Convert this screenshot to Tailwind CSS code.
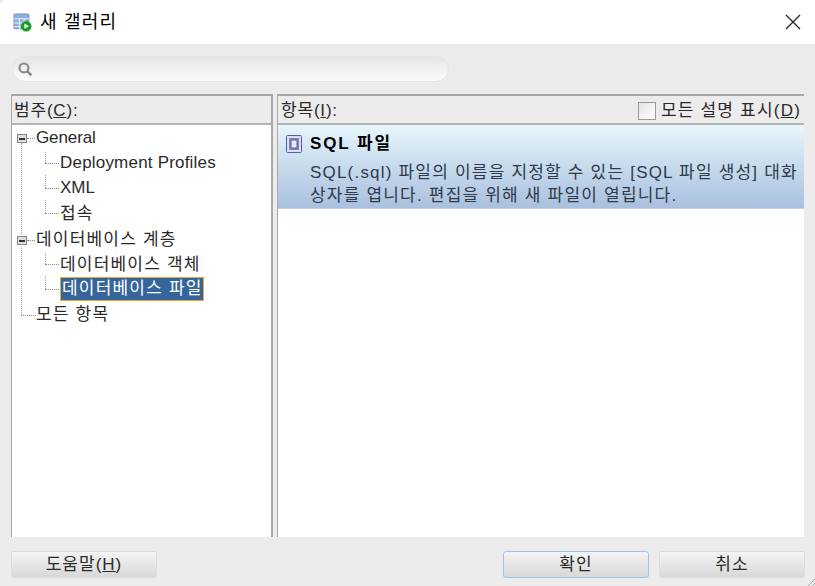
<!DOCTYPE html>
<html lang="ko">
<head>
    <meta charset="UTF-8">
    <title>새 갤러리</title>
    <script src="https://cdn.jsdelivr.net/npm/@tailwindcss/browser@4"></script>
</head>
<body class="relative w-[815px] h-[586px] overflow-hidden bg-[#ececec] text-[17px] text-[#2a2a2a] font-['Liberation_Sans','Noto_Sans_CJK_KR',sans-serif]">
    <!-- Title bar -->
    <div class="h-[44px] bg-white flex items-center pl-[13px] pr-[14px] rounded-tl-[6px]">
        <svg width="19" height="19" viewBox="0 0 18 18" class="mr-[8px]">
            <rect x="1" y="1" width="14" height="14" rx="1" fill="#8fb0dc" stroke="#6f93c6"/>
            <path d="M1 5.500h14M1 9.500h14M1 13h14M6 5.500v9.500M10.500 5.500v9.500" stroke="#e9f0fa" stroke-width="1"/>
            <circle cx="12.500" cy="12.500" r="5" fill="#1f9c1f"/>
            <path d="M10.800 10l4.400 2.500-4.400 2.500z" fill="#fff"/>
        </svg>
        <span class="text-[18px] tracking-[1.2px] text-black">새 갤러리</span>
        <svg width="16" height="16" viewBox="0 0 16 16" class="ml-auto">
            <path d="M1 1l14 14M15 1L1 15" stroke="#222" stroke-width="1.300"/>
        </svg>
    </div>

    <!-- Search -->
    <div class="pt-[12px] pl-[12px]">
        <div class="w-[437px] h-[26px] rounded-full bg-gradient-to-b from-[#e6e6e6] to-[#fbfbfb] border border-[#e4e4e4] flex items-center pl-[4px]">
            <svg width="16" height="16" viewBox="0 0 15 15">
                <circle cx="6.500" cy="6.500" r="4.200" fill="none" stroke="#8a8a8a" stroke-width="2"/>
                <path d="M9.800 9.800l3.700 3.700" stroke="#8a8a8a" stroke-width="2.400"/>
            </svg>
        </div>
    </div>

    <!-- Panels -->
    <div class="flex gap-[4px] pl-[11px] pt-[12px]">
        <!-- Categories -->
        <div class="w-[262px] h-[443px] flex flex-col border-l border-r-2 border-t-2 border-[#a8a8a8]">
            <div class="h-[29px] shrink-0 border-b-2 border-[#b4b4b4] pl-[2px] pt-[3px] flex items-center tracking-[0.8px]">범주(<u>C</u>):</div>
            <div class="flex-1 bg-white">
                <div class="relative h-[25px] flex items-center pl-[24px] tracking-[-0.1px]">
                    <span class="absolute left-[5px] top-[9px] w-[10px] h-[9px] border border-[#888] bg-[#ddd] flex items-center justify-center"><span class="w-[6px] h-[2px] bg-[#333]"></span></span>
                    <span class="absolute left-[15px] top-[13px] w-[8px] border-t border-dotted border-[#888]"></span>
                    <span class="absolute left-[9px] top-[18px] h-[172px] border-l border-dotted border-[#aaa]"></span>
                    General
                </div>
                <div class="relative h-[25px] flex items-center pl-[48px] tracking-[0.2px]">
                    <span class="absolute left-[33px] top-[2px] h-[11px] border-l border-dotted border-[#aaa]"></span>
                    <span class="absolute left-[33px] top-[13px] w-[14px] border-t border-dotted border-[#888]"></span>
                    Deployment Profiles
                </div>
                <div class="relative h-[25px] flex items-center pl-[48px]">
                    <span class="absolute left-[33px] top-0 h-[13px] border-l border-dotted border-[#aaa]"></span>
                    <span class="absolute left-[33px] top-[13px] w-[14px] border-t border-dotted border-[#888]"></span>
                    XML
                </div>
                <div class="relative h-[26px] flex items-center pl-[48px] pt-[2px] tracking-[1.2px]">
                    <span class="absolute left-[33px] top-0 h-[13px] border-l border-dotted border-[#aaa]"></span>
                    <span class="absolute left-[33px] top-[13px] w-[14px] border-t border-dotted border-[#888]"></span>
                    접속
                </div>
                <div class="relative h-[25px] flex items-center pl-[24px] pt-[2px] tracking-[1.2px]">
                    <span class="absolute left-[5px] top-[10px] w-[10px] h-[9px] border border-[#888] bg-[#ddd] flex items-center justify-center"><span class="w-[6px] h-[2px] bg-[#333]"></span></span>
                    <span class="absolute left-[15px] top-[14px] w-[8px] border-t border-dotted border-[#888]"></span>
                    데이터베이스 계층
                </div>
                <div class="relative h-[25px] flex items-center pl-[48px] pt-[2px] tracking-[1.2px]">
                    <span class="absolute left-[33px] top-[2px] h-[11px] border-l border-dotted border-[#aaa]"></span>
                    <span class="absolute left-[33px] top-[13px] w-[14px] border-t border-dotted border-[#888]"></span>
                    데이터베이스 객체
                </div>
                <div class="relative h-[25px] flex items-center pl-[48px] tracking-[1.2px]">
                    <span class="absolute left-[33px] top-0 h-[13px] border-l border-dotted border-[#aaa]"></span>
                    <span class="absolute left-[33px] top-[13px] w-[14px] border-t border-dotted border-[#888]"></span>
                    <span class="h-[24px] mt-[1px] pl-[1px] bg-[#36659c] border border-[#f0a830] text-white flex items-center">데이터베이스 파일</span>
                </div>
                <div class="relative h-[25px] flex items-center pl-[24px] pt-[2px] tracking-[1.2px]">
                    <span class="absolute left-[9px] top-[14px] w-[15px] border-t border-dotted border-[#888]"></span>
                    모든 항목
                </div>
            </div>
        </div>

        <!-- Items -->
        <div class="w-[527px] h-[443px] flex flex-col border-l border-t-2 border-[#a8a8a8]">
            <div class="h-[29px] shrink-0 border-b-2 border-[#b4b4b4] pl-[3px] pr-[3px] pt-[3px] flex items-center justify-between tracking-[0.8px]">
                <span>항목(<u>I</u>):</span>
                <span class="flex items-center gap-[5px] tracking-[1.2px]">
                    <span class="w-[18px] h-[18px] border border-[#999] bg-gradient-to-br from-[#e4e4e4] to-white"></span>
                    <span>모든 설명 표시(<u>D</u>)</span>
                </span>
            </div>
            <div class="flex-1 bg-white">
                <div class="h-[84px] bg-gradient-to-b from-[#e6f6fc] to-[#a9c0de] border-b border-[#c5d3e6]">
                    <div class="flex items-center gap-[8px] pl-[8px] pt-[4px] h-[33px]">
                        <svg width="16" height="18" viewBox="0 0 16 18">
                            <rect x="0.500" y="0.500" width="15" height="17" rx="1" fill="#dcdcf0" stroke="#5a5aa0"/>
                            <rect x="3" y="3" width="10" height="12" fill="#8484c0"/>
                            <rect x="5" y="5" width="6" height="8" rx="1" fill="#e8e8f4" stroke="#44447a" stroke-width="0.800"/>
                        </svg>
                        <span class="font-bold text-black tracking-[1.9px]">SQL 파일</span>
                    </div>
                    <div class="pl-[32px] pt-[3px] leading-[23px] text-[#2f3a4a] whitespace-nowrap tracking-[1.2px]">
                        <div>SQL(.sql) 파일의 이름을 지정할 수 있는 [SQL 파일 생성] 대화</div>
                        <div>상자를 엽니다. 편집을 위해 새 파일이 열립니다.</div>
                    </div>
                </div>
            </div>
        </div>
    </div>

    <!-- Buttons -->
    <div class="flex pl-[11px] pt-[14px]">
        <button class="w-[146px] h-[27px] rounded-[3px] border border-[#dcdcdc] bg-gradient-to-b from-[#f4f4f4] to-[#d8d8d8] tracking-[1px]">도움말(<u>H</u>)</button>
        <button class="ml-[346px] w-[146px] h-[27px] rounded-[3px] border border-[#9cc4e8] bg-gradient-to-b from-[#f4f4f4] to-[#d8d8d8] tracking-[1px]">확인</button>
        <button class="ml-[10px] w-[146px] h-[27px] rounded-[3px] border border-[#dcdcdc] bg-gradient-to-b from-[#f4f4f4] to-[#d8d8d8] tracking-[1px]">취소</button>
    </div>

    <!-- Resize grip -->
    <svg width="8" height="8" viewBox="0 0 8 8" class="absolute right-0 bottom-0">
        <path d="M8 1L1 8M8 5L5 8" stroke="#aaa"/>
    </svg>
</body>
</html>
